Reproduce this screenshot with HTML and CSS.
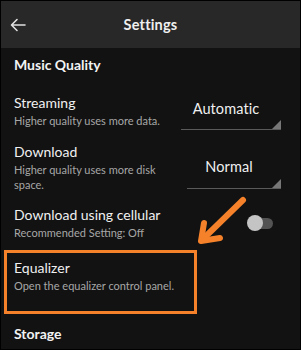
FILE: index.html
```html
<!DOCTYPE html>
<html>
<head>
<meta charset="utf-8">
<link rel="stylesheet" href="styles.css">
</head>
<body>
<div class="screen">
  <header class="topbar">
    <svg class="back" width="16" height="14" viewBox="0 0 16 14"><path d="M15 7H2M7 1.5L1.5 7L7 12.5" fill="none" stroke="#e0e0e0" stroke-width="1.6" stroke-linecap="round" stroke-linejoin="round"/></svg>
    <h1 class="title">Settings</h1>
  </header>
  <main class="content">
    <h2 class="section">Music Quality</h2>

    <div class="row row-streaming">
      <div class="text">
        <div class="label">Streaming</div>
        <div class="desc">Higher quality uses more data.</div>
      </div>
      <div class="select select-auto"><span>Automatic</span></div>
    </div>

    <div class="row row-download">
      <div class="text narrow">
        <div class="label">Download</div>
        <div class="desc">Higher quality uses more disk space.</div>
      </div>
      <div class="select select-normal"><span>Normal</span></div>
    </div>

    <div class="row row-cellular">
      <div class="text">
        <div class="label">Download using cellular</div>
        <div class="desc">Recommended Setting: Off</div>
      </div>
      <div class="toggle"><div class="knob"></div></div>
    </div>

    <div class="row row-eq">
      <div class="text">
        <div class="label">Equalizer</div>
        <div class="desc">Open the equalizer control panel.</div>
      </div>
    </div>

    <h2 class="section storage">Storage</h2>
  </main>
  <svg class="arrow" width="301" height="350" viewBox="0 0 301 350">
    <g fill="none" stroke="#f5822a" stroke-width="6" stroke-linecap="round" stroke-linejoin="round">
      <path d="M243 200L205 237"/>
      <path d="M204 223L201 241L220 238"/>
    </g>
  </svg>
</div>
</body>
</html>
```

FILE: styles.css
```css
* { box-sizing: border-box; margin: 0; padding: 0; }
html, body { width: 301px; height: 350px; background: #000; overflow: hidden; }
body { font-family: Lato, "Noto Sans", sans-serif; color: #fff; }
.screen {
  position: relative;
  width: 301px;
  height: 350px;
  background: #121212;
  border: 1px solid #000;
  overflow: hidden;
}
.topbar {
  height: 47px;
  background: #282828;
  display: flex;
  align-items: center;
  justify-content: center;
  position: relative;
}
.back { position: absolute; left: 9px; top: 17px; }
.title { font-size: 14.5px; font-weight: 700; color: #f0f0f0; letter-spacing: 0.2px; }
.content { padding: 7px 0 0 13px; }
.section { font-size: 14px; font-weight: 700; line-height: 20px; color: #f2f2f2; }
.row { display: flex; justify-content: space-between; align-items: flex-start; padding-right: 19px; }
.text { display: flex; flex-direction: column; }
.narrow { width: 160px; }
.label { font-size: 14px; line-height: 18px; color: #f0f0f0; }
.desc { font-size: 11px; line-height: 15px; color: #a7a7a7; margin-top: 1px; }
.row-streaming { margin-top: 19px; }
.row-download { margin-top: 13px; }
.row-cellular { margin-top: 14px; }
.row-eq { margin-top: 19px; position: relative; }
.row-eq::before {
  content: "";
  position: absolute;
  left: -10px;
  top: -9px;
  width: 187px;
  height: 58px;
  border: 3px solid #f5822a;
}
.storage { margin-top: 31px; }
.select {
  position: relative;
  height: 33px;
  border-bottom: 1.5px solid #5a5a5a;
  display: flex;
  align-items: flex-start;
  justify-content: center;
  padding-right: 10px;
  font-size: 14.5px;
  line-height: 18px;
  color: #f0f0f0;
  letter-spacing: 0.1px;
}
.select::after {
  content: "";
  position: absolute;
  right: 0;
  bottom: 0;
  width: 0;
  height: 0;
  border-left: 9px solid transparent;
  border-bottom: 9px solid #777;
}
.select-auto { width: 100px; margin-top: 3px; padding-top: 3px; }
.select-normal { width: 94px; margin-top: 13px; padding-top: 2px; }
.toggle {
  position: relative;
  width: 22px;
  height: 11px;
  border-radius: 6px;
  background: #535353;
  margin-top: 12px;
  margin-right: 8px;
}
.knob {
  position: absolute;
  left: -4px;
  top: -3px;
  width: 16px;
  height: 16px;
  border-radius: 50%;
  background: #c4c4c4;
}
.arrow { position: absolute; left: -1px; top: -1px; pointer-events: none; }
```
